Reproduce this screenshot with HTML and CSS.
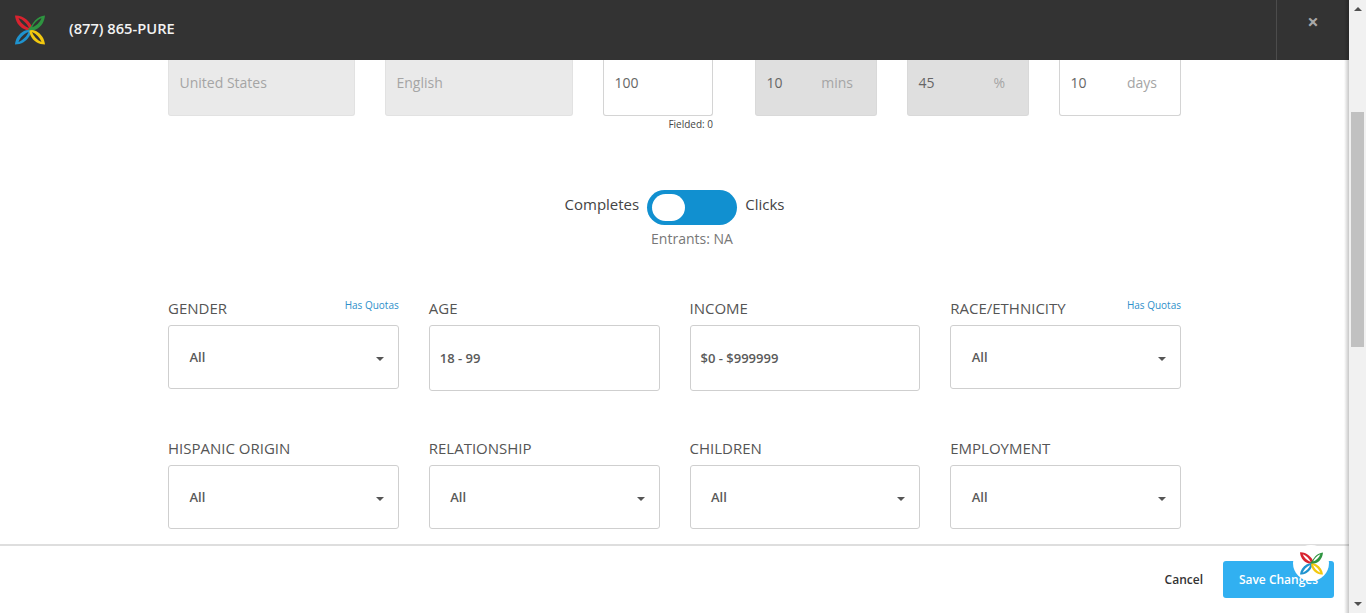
FILE: index.html
```html
<!DOCTYPE html>
<html lang="en">
<head>
<meta charset="utf-8">
<title>Edit Survey</title>
<link rel="stylesheet" href="styles.css">
</head>
<body>
<svg class="defs" width="0" height="0" aria-hidden="true">
  <symbol id="logo" viewBox="0 0 30 30">
    <path fill-rule="evenodd" d="M0 .5C8 0 15 6 18 13.500 16 16 12 15.500 9 14 3.500 11.500 .5 6 0 .5ZM3.500 3C5 7 9 11 14 13 12 8.500 8 4.500 3.500 3Z" fill="#d8232f"/>
    <path fill-rule="evenodd" d="M30 .5C29.500 6 27 11.500 21 14.500 18 16 14 16 13 14 16 12.500 17 9 20 5.500 23 2.500 26 1 30 .5ZM26.500 3C22 5 19 8.500 17 12.500 21 11 25 7.500 26.500 3Z" fill="#2e9440"/>
    <path fill-rule="evenodd" d="M0 29.500C.5 24 3.500 19 9 16 11.500 14.800 14 14.500 16 15.500 16 21 12 25 8.500 27.300 6 28.800 3 29.500 0 29.500ZM3.500 27C8 25 12 21 13.500 17 8.500 19 5 23 3.500 27Z" fill="#1f93cf"/>
    <path fill-rule="evenodd" d="M30 29.500C29.500 24 26.500 19 21 16 18.500 14.800 16 14.500 14.500 15.500 14.500 21 18 25 21.500 27.300 24 28.800 27 29.500 30 29.500ZM26.500 27C25 23 21.500 19 17 17 18.500 21 22 25 26.500 27Z" fill="#f2c80f"/>
  </symbol>
</svg>
<div class="page">
  <div class="modal">
    <header class="top">
      <svg class="top-logo"><use href="#logo"/></svg>
      <span class="phone">(877) 865-PURE</span>
      <div class="close-cell"><span class="close">×</span></div>
    </header>
    <main class="content">
      <div class="fields">
        <div class="fbox off w187"><span class="ph">United States</span></div>
        <div class="fbox off w188"><span class="ph">English</span></div>
        <div class="fcol">
          <div class="fbox w110"><span class="val">100</span></div>
          <div class="fielded">Fielded: 0</div>
        </div>
        <div class="fbox dark w122 ml12"><span class="val">10</span><span class="unit">mins</span></div>
        <div class="fbox dark w122"><span class="val">45</span><span class="unit pct">%</span></div>
        <div class="fbox w122"><span class="val">10</span><span class="unit">days</span></div>
      </div>
      <div class="switch-row">
        <span class="sw-text">Completes</span>
        <span class="switch"><span class="knob"></span></span>
        <span class="sw-text">Clicks</span>
      </div>
      <div class="entrants">Entrants: NA</div>
      <div class="grid">
        <div class="cell">
          <div class="lab"><span>GENDER</span><a class="quota">Has Quotas</a></div>
          <div class="sel"><span>All</span><i class="caret"></i></div>
        </div>
        <div class="cell">
          <div class="lab"><span>AGE</span></div>
          <div class="inp">18 - 99</div>
        </div>
        <div class="cell">
          <div class="lab"><span>INCOME</span></div>
          <div class="inp">$0 - $999999</div>
        </div>
        <div class="cell">
          <div class="lab"><span>RACE/ETHNICITY</span><a class="quota">Has Quotas</a></div>
          <div class="sel"><span>All</span><i class="caret"></i></div>
        </div>
        <div class="cell">
          <div class="lab"><span>HISPANIC ORIGIN</span></div>
          <div class="sel"><span>All</span><i class="caret"></i></div>
        </div>
        <div class="cell">
          <div class="lab"><span>RELATIONSHIP</span></div>
          <div class="sel"><span>All</span><i class="caret"></i></div>
        </div>
        <div class="cell">
          <div class="lab"><span>CHILDREN</span></div>
          <div class="sel"><span>All</span><i class="caret"></i></div>
        </div>
        <div class="cell">
          <div class="lab"><span>EMPLOYMENT</span></div>
          <div class="sel"><span>All</span><i class="caret"></i></div>
        </div>
      </div>
    </main>
    <footer class="bottom">
      <a class="cancel">Cancel</a>
      <button class="save" type="button">Save Changes</button>
      <span class="badge"><svg class="badge-logo"><use href="#logo"/></svg></span>
    </footer>
  </div>
  <div class="scrollbar">
    <i class="arrow up"></i>
    <div class="track"><div class="thumb"></div></div>
    <i class="arrow down"></i>
  </div>
</div>
</body>
</html>
```

FILE: styles.css
```css
* { box-sizing: border-box; }
html, body { margin: 0; height: 100%; overflow: hidden; }
body { font-family: "Open Sans", "Liberation Sans", sans-serif; color: #555; background: #fff; }
.defs { position: absolute; }
.page { display: flex; height: 613px; }
.modal { position: relative; flex: 1; display: flex; flex-direction: column; min-width: 0; }
.modal::after { content: ""; position: absolute; top: 0; right: 0; bottom: 0; width: 5px; background: linear-gradient(to right, rgba(0,0,0,0), rgba(0,0,0,.22)); pointer-events: none; }

.top { height: 60px; flex: none; background: #333; display: flex; align-items: center; padding-left: 15px; }
.top-logo { width: 30px; height: 30px; flex: none; }
.phone { margin: 0 0 5px 24px; font-size: 14.700px; font-weight: 600; color: #f2f2f2; }
.close-cell { margin-left: auto; width: 73px; height: 60px; border-left: 1px solid #4c4c4c; display: flex; justify-content: center; }
.close { font-size: 20px; line-height: 44px; font-weight: 700; color: #a8a8a8; }

.content { flex: 1; min-height: 0; overflow: hidden; padding: 0 168px; }
.fields { display: flex; gap: 30px; align-items: flex-start; }
.fcol { display: flex; flex-direction: column; align-items: flex-end; }
.fbox { height: 56px; border: 1px solid #d4d4d4; border-top: 0; border-radius: 0 0 3px 3px; display: flex; justify-content: space-between; align-items: center; padding: 0 23px 10px 10.500px; font-size: 14px; flex: none; }
.w187 { width: 187px; }
.w188 { width: 188px; }
.w110 { width: 110px; }
.w122 { width: 122px; }
.ml12 { margin-left: 12px; }
.off { background: #eaeaea; border-color: #e2e2e2; }
.dark { background: #dfdfdf; border-color: #d9d9d9; }
.ph { color: #a5a5a5; }
.val { color: #666; }
.unit { color: #a5a5a5; }
.fielded { font-size: 10px; line-height: 16px; color: #444; }

.switch-row { margin-top: 58px; height: 35px; display: flex; justify-content: center; align-items: center; gap: 8px; font-size: 15px; color: #444; }
.sw-text { margin-bottom: 8px; }
.switch { width: 90px; height: 35px; border-radius: 18px; background: #1190d0; display: flex; align-items: center; padding-left: 5px; }
.knob { width: 33px; height: 27px; border-radius: 14px; background: #fff; }
.entrants { margin-top: 5px; padding-left: 35px; text-align: center; font-size: 14px; line-height: 18px; color: #777; }

.grid { margin-top: 50px; display: grid; grid-template-columns: repeat(4, 1fr); column-gap: 30px; row-gap: 47px; align-items: start; }
.lab { height: 27px; display: flex; justify-content: space-between; font-size: 15px; line-height: 20px; color: #555; }
.quota { font-size: 10px; line-height: 14px; color: #2e8fca; }
.sel, .inp { border: 1px solid #cfcfcf; border-radius: 3px; font-size: 13px; font-weight: 600; color: #5a5a5a; display: flex; align-items: center; }
.sel { height: 64px; justify-content: space-between; padding: 0 14px 0 20.500px; }
.inp { height: 66px; padding-left: 10px; }
.caret { width: 0; height: 0; border: 4px solid transparent; border-top: 4px solid #555; border-bottom: 0; margin-top: 3px; }

.bottom { position: relative; height: 69px; flex: none; border-top: 2px solid #dedede; display: flex; justify-content: flex-end; align-items: flex-start; padding: 15px 15px 0 0; }
.cancel { font-size: 12px; font-weight: 600; color: #333; line-height: 37px; margin-right: 20px; }
.save { width: 111px; height: 37px; border: 0; border-radius: 3px; background: #31b0f1; color: #fff; font: 600 12px "Open Sans", "Liberation Sans", sans-serif; padding: 0; }
.badge { position: absolute; left: 1293px; top: -1px; width: 36px; height: 36px; border-radius: 50%; background: #fff; display: flex; align-items: center; justify-content: center; }
.badge-logo { width: 23px; height: 23px; }

.scrollbar { width: 17px; flex: none; background: #f1f1f1; display: flex; flex-direction: column; align-items: center; }
.track { flex: 1; width: 100%; padding: 95px 2px 0; }
.thumb { height: 235px; background: #c1c1c1; }
.arrow { width: 0; height: 0; border: 4px solid transparent; flex: none; }
.up { border-top: 0; border-bottom: 4px solid #505050; margin: 7px 0 6px; }
.down { border-bottom: 0; border-top: 4px solid #505050; margin: 6px 0 7px; }
```
